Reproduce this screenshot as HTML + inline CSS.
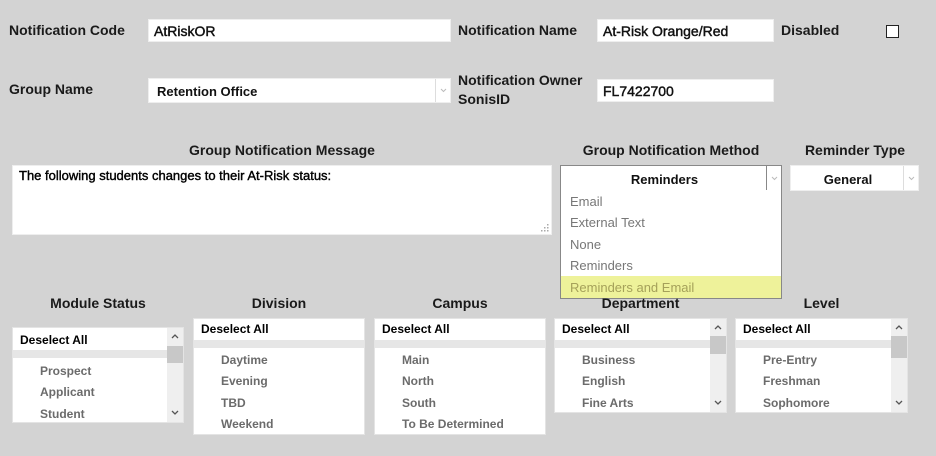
<!DOCTYPE html>
<html><head><meta charset="utf-8"><style>
*{margin:0;padding:0;box-sizing:border-box}
body{width:936px;height:456px;background:#d3d3d3;font-family:"Liberation Sans",sans-serif;position:relative;overflow:hidden;color:#111}
.a{position:absolute}
.lbl{font-size:14px;font-weight:bold;color:#1a1a1a;line-height:19px}
.inp{background:#fff;border:1px solid #eee}
.v{font-size:13px;font-weight:bold;color:#111}
.iv{position:absolute;left:5px;top:3px;font-size:14px;color:#111;-webkit-text-stroke:0.45px #111}
.hd{font-size:14px;font-weight:bold;text-align:center;color:#1a1a1a}
.arr{position:absolute;top:0;bottom:0;border-left:1px solid #ddd;display:flex;align-items:center;justify-content:center}
.box{background:#fff;border:1px solid #e4e4e4;overflow:hidden}
.box .da{position:absolute;left:7px;font-size:12px;font-weight:bold;color:#000}
.box .band{position:absolute;left:0;height:8px;background:#e6e6e6}
.box .it{position:absolute;left:27px;font-size:12px;font-weight:bold;color:#6b6b6b}
.sb{position:absolute;top:0;bottom:0;width:16px;right:0;background:#efefef}
.sb .th{position:absolute;left:0;width:16px;background:#c8c8c8}
.sb svg{position:absolute;left:4px}
.dd{font-size:13px;color:#777;position:absolute;left:9px}
</style></head><body>

<div class="a lbl" style="left:9px;top:21px">Notification Code</div>
<div class="a inp" style="left:148px;top:19px;width:303px;height:23px"><span class="iv">AtRiskOR</span></div>

<div class="a lbl" style="left:458px;top:21px">Notification Name</div>
<div class="a inp" style="left:597px;top:19px;width:177px;height:23px"><span class="iv">At-Risk Orange/Red</span></div>
<div class="a lbl" style="left:781px;top:21px">Disabled</div>
<div class="a" style="left:886px;top:25px;width:13px;height:13px;border:1px solid #222;background:#fff"></div>

<div class="a lbl" style="left:9px;top:80px">Group Name</div>
<div class="a inp" style="left:148px;top:78px;width:303px;height:25px"><span class="a v" style="left:8px;top:5px">Retention Office</span><div class="arr" style="right:0;width:15px"><svg width="7" height="5"><path d="M1 1L3.5 3.5L6 1" stroke="#bbb" fill="none"/></svg></div></div>

<div class="a lbl" style="left:458px;top:71px">Notification Owner<br>SonisID</div>
<div class="a inp" style="left:597px;top:79px;width:177px;height:23px"><span class="iv">FL7422700</span></div>

<div class="a hd" style="left:12px;width:540px;top:142px">Group Notification Message</div>
<div class="a" style="left:12px;top:165px;width:540px;height:70px;background:#fff;border:1px solid #eee">
<div class="a" style="left:6px;top:2px;font-size:13px;color:#000;-webkit-text-stroke:0.4px #000">The following students changes to their At-Risk status:</div>
<svg class="a" style="right:2px;bottom:2px" width="8" height="8"><g fill="#aaa"><rect x="6" y="0" width="1.5" height="1.5"/><rect x="3" y="3" width="1.5" height="1.5"/><rect x="6" y="3" width="1.5" height="1.5"/><rect x="0" y="6" width="1.5" height="1.5"/><rect x="3" y="6" width="1.5" height="1.5"/><rect x="6" y="6" width="1.5" height="1.5"/></g></svg></div>

<div class="a hd" style="left:560px;width:222px;top:142px">Group Notification Method</div>
<div class="a" style="left:560px;top:165px;width:222px;height:26px;background:#fff;border:1px solid #888">
<div class="a v" style="left:0;width:207px;text-align:center;top:6px">Reminders</div>
<div class="arr" style="right:0;width:15px;border-left:1px solid #888"><svg width="7" height="5"><path d="M1 1L3.5 3.5L6 1" stroke="#bbb" fill="none"/></svg></div></div>
<div class="a" style="left:560px;top:190px;width:222px;height:109px;background:#fff;border:1px solid #888;border-top:none">
<div class="dd" style="top:4px">Email</div>
<div class="dd" style="top:25px">External Text</div>
<div class="dd" style="top:47px">None</div>
<div class="dd" style="top:68px">Reminders</div>
<div class="a" style="left:0;right:0;top:86px;height:22px;background:#eef29a"></div>
<div class="dd" style="top:90px;color:#a5a15a">Reminders and Email</div>
</div>

<div class="a hd" style="left:790px;width:130px;top:142px">Reminder Type</div>
<div class="a" style="left:790px;top:165px;width:129px;height:26px;background:#fff;border:1px solid #eee">
<div class="a v" style="left:0;width:114px;text-align:center;top:6px">General</div>
<div class="arr" style="right:0;width:15px"><svg width="7" height="5"><path d="M1 1L3.5 3.5L6 1" stroke="#bbb" fill="none"/></svg></div></div>

<!-- bottom -->
<div class="a hd" style="left:12px;width:172px;top:295px">Module Status</div>
<div class="a box" style="left:12px;top:327px;width:172px;height:96px">
<div class="da" style="top:5px">Deselect All</div><div class="band" style="top:22px;width:155px"></div>
<div class="it" style="top:36px">Prospect</div><div class="it" style="top:57px">Applicant</div><div class="it" style="top:79px">Student</div>
<div class="sb"><svg style="top:6px" width="8" height="5"><path d="M1 4L4 1L7 4" stroke="#555" stroke-width="1.3" fill="none"/></svg><div class="th" style="top:18px;height:17px"></div><svg style="bottom:7px" width="8" height="5"><path d="M1 1L4 4L7 1" stroke="#555" stroke-width="1.3" fill="none"/></svg></div></div>

<div class="a hd" style="left:193px;width:172px;top:295px">Division</div>
<div class="a box" style="left:193px;top:318px;width:172px;height:117px">
<div class="da" style="top:3px">Deselect All</div><div class="band" style="top:21px;width:172px"></div>
<div class="it" style="top:34px">Daytime</div><div class="it" style="top:55px">Evening</div><div class="it" style="top:77px">TBD</div><div class="it" style="top:98px">Weekend</div></div>

<div class="a hd" style="left:374px;width:172px;top:295px">Campus</div>
<div class="a box" style="left:374px;top:318px;width:172px;height:117px">
<div class="da" style="top:3px">Deselect All</div><div class="band" style="top:21px;width:172px"></div>
<div class="it" style="top:34px">Main</div><div class="it" style="top:55px">North</div><div class="it" style="top:77px">South</div><div class="it" style="top:98px">To Be Determined</div></div>

<div class="a hd" style="left:554px;width:173px;top:295px">Department</div>
<div class="a box" style="left:554px;top:318px;width:173px;height:95px">
<div class="da" style="top:3px">Deselect All</div><div class="band" style="top:21px;width:156px"></div>
<div class="it" style="top:34px">Business</div><div class="it" style="top:55px">English</div><div class="it" style="top:77px">Fine Arts</div>
<div class="sb"><svg style="top:6px" width="8" height="5"><path d="M1 4L4 1L7 4" stroke="#555" stroke-width="1.3" fill="none"/></svg><div class="th" style="top:17px;height:18px"></div><svg style="bottom:7px" width="8" height="5"><path d="M1 1L4 4L7 1" stroke="#555" stroke-width="1.3" fill="none"/></svg></div></div>

<div class="a hd" style="left:735px;width:173px;top:295px">Level</div>
<div class="a box" style="left:735px;top:318px;width:173px;height:95px">
<div class="da" style="top:3px">Deselect All</div><div class="band" style="top:21px;width:156px"></div>
<div class="it" style="top:34px">Pre-Entry</div><div class="it" style="top:55px">Freshman</div><div class="it" style="top:77px">Sophomore</div>
<div class="sb"><svg style="top:6px" width="8" height="5"><path d="M1 4L4 1L7 4" stroke="#555" stroke-width="1.3" fill="none"/></svg><div class="th" style="top:17px;height:22px"></div><svg style="bottom:7px" width="8" height="5"><path d="M1 1L4 4L7 1" stroke="#555" stroke-width="1.3" fill="none"/></svg></div></div>

</body></html>
